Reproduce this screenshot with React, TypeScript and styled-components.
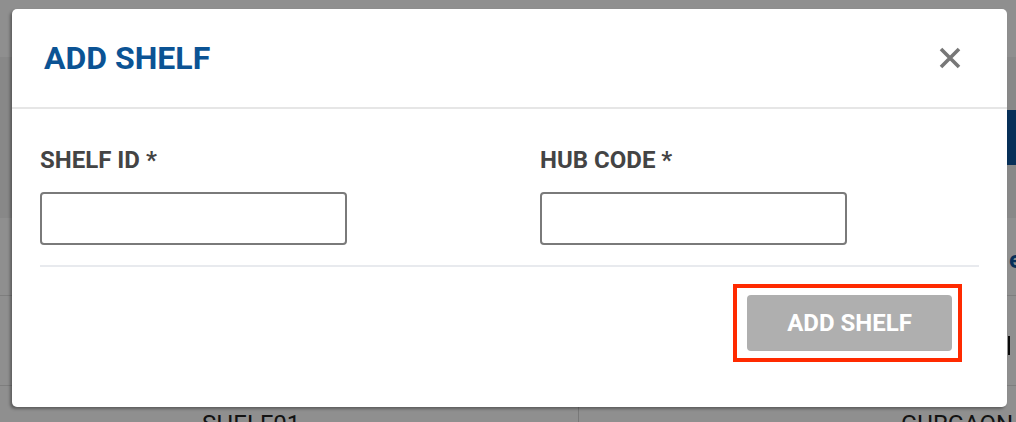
import React from "react";
import styled, { createGlobalStyle } from "styled-components";

const GlobalStyle = createGlobalStyle`
  html, body {
    margin: 0;
    padding: 0;
    background: #ffffff;
    font-family: Roboto, "Liberation Sans", Arial, sans-serif;
  }
`;

const Screen = styled.div`
  position: relative;
  width: 1016px;
  height: 422px;
  overflow: hidden;
  background: #ffffff;
`;

/* page behind the modal */
const Page = styled.div`
  display: flex;
  flex-direction: column;
  width: 100%;
`;

const Band = styled.div<{ $h: number; $bg?: string; $line?: boolean }>`
  height: ${(p) => p.$h}px;
  background: ${(p) => p.$bg || "#ffffff"};
  border-top: ${(p) => (p.$line ? "1px solid #e0e0e0" : "none")};
  display: flex;
  flex-direction: column;
  align-items: flex-end;
  box-sizing: border-box;
`;

const NavyTab = styled.div`
  margin-top: 53px;
  width: 40px;
  height: 55px;
  background: #0d579f;
`;

const LinkText = styled.span`
  margin-top: 28px;
  margin-right: -6px;
  font-size: 24px;
  font-weight: 700;
  color: #0d579f;
`;

const CellBar = styled.div`
  margin-top: 40px;
  margin-right: 6px;
  width: 2px;
  height: 19px;
  background: #111;
`;

const TableRow = styled.div`
  display: grid;
  grid-template-columns: 578px 1fr;
  border-top: 1px solid #e0e0e0;
  height: 40px;
`;

const Cell = styled.div<{ $divider?: boolean; $indent: number }>`
  border-left: ${(p) => (p.$divider ? "1px solid #d6d6d6" : "none")};
  padding-top: 24px;
  padding-left: ${(p) => p.$indent}px;
  font-size: 24px;
  color: #222;
  line-height: 28px;
`;

const Overlay = styled.div`
  position: absolute;
  inset: 0;
  background: rgba(0, 0, 0, 0.44);
`;

const Modal = styled.div`
  position: absolute;
  left: 12px;
  top: 9px;
  width: 995px;
  height: 398px;
  background: #ffffff;
  border-radius: 5px;
  box-shadow: -2px 2px 3px rgba(0, 0, 0, 0.35);
  display: flex;
  flex-direction: column;
`;

const Header = styled.div`
  height: 98px;
  padding: 0 46px 0 32px;
  display: flex;
  align-items: center;
  justify-content: space-between;
  border-bottom: 2px solid #e6e6e6;
`;

const Title = styled.h2`
  margin: 0;
  font-size: 32px;
  font-weight: 700;
  color: #0b5394;
`;

const CloseButton = styled.button`
  border: none;
  background: none;
  padding: 0;
  width: 22px;
  height: 22px;
  display: flex;
  cursor: pointer;
`;

const Body = styled.div`
  padding: 0 28px;
  display: flex;
  flex-direction: column;
`;

const Fields = styled.div`
  display: grid;
  grid-template-columns: 500px 500px;
  padding-top: 37px;
  padding-bottom: 20px;
  border-bottom: 2px solid #e8eaee;
`;

const Field = styled.label`
  display: flex;
  flex-direction: column;
`;

const Label = styled.span`
  font-size: 24px;
  font-weight: 700;
  color: #444444;
  line-height: 28px;
  margin-bottom: 18px;
`;

const Input = styled.input`
  width: 307px;
  height: 53px;
  box-sizing: border-box;
  border: 2px solid #7a7a7a;
  border-radius: 4px;
  font-size: 20px;
  font-family: inherit;
  padding: 0 12px;
  outline: none;
`;

const Footer = styled.div`
  display: flex;
  justify-content: flex-end;
  padding-top: 17px;
  padding-right: 17px;
`;

const Highlight = styled.div`
  border: 4px solid #ff2a00;
  padding: 7px 6px 7px 10px;
`;

const SubmitButton = styled.button`
  width: 205px;
  height: 56px;
  border: none;
  border-radius: 4px;
  background: #afafaf;
  color: #ffffff;
  font-family: inherit;
  font-size: 24px;
  font-weight: 700;
`;

export default function App() {
  return (
    <>
      <GlobalStyle />
      <Screen>
        <Page>
          <Band $h={57} />
          <Band $h={161} $bg="#f3f3f3">
            <NavyTab />
          </Band>
          <Band $h={77}>
            <LinkText>e</LinkText>
          </Band>
          <Band $h={90} $line>
            <CellBar />
          </Band>
          <TableRow>
            <Cell $indent={202}>SHELF01</Cell>
            <Cell $divider $indent={322}>GURGAON</Cell>
          </TableRow>
        </Page>
        <Overlay />
        <Modal>
          <Header>
            <Title>ADD SHELF</Title>
            <CloseButton aria-label="close">
              <svg width="22" height="22" viewBox="0 0 22 22">
                <path d="M2 2 L20 20 M20 2 L2 20" stroke="#777777" strokeWidth="3.6" />
              </svg>
            </CloseButton>
          </Header>
          <Body>
            <Fields>
              <Field>
                <Label>SHELF ID *</Label>
                <Input />
              </Field>
              <Field>
                <Label>HUB CODE *</Label>
                <Input />
              </Field>
            </Fields>
            <Footer>
              <Highlight>
                <SubmitButton>ADD SHELF</SubmitButton>
              </Highlight>
            </Footer>
          </Body>
        </Modal>
      </Screen>
    </>
  );
}
